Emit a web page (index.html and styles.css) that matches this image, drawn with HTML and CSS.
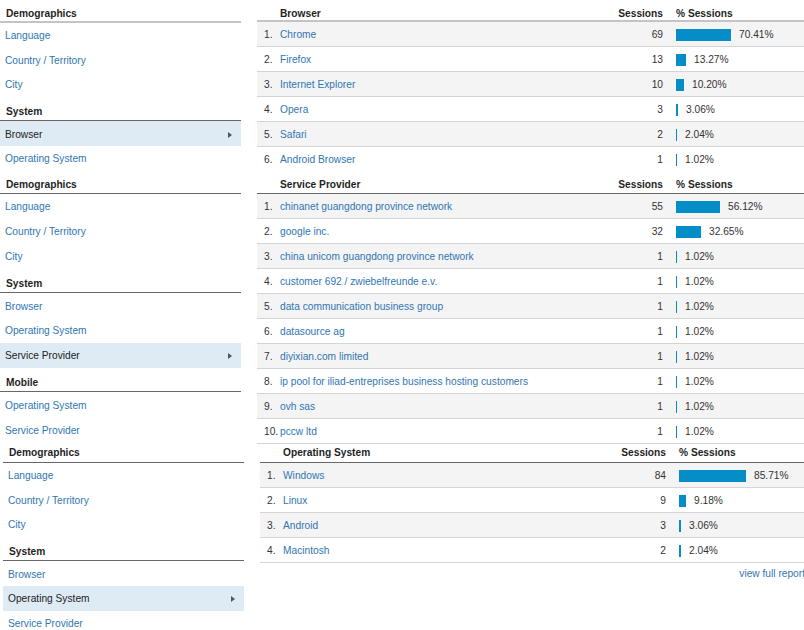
FILE: index.html
```html
<!DOCTYPE html>
<html lang="en">
<head>
<meta charset="utf-8">
<title>Audience reports</title>
<link rel="stylesheet" href="styles.css">
</head>
<body>

<div class="shot shot-1">
  <nav class="nav">
    <div class="nav-head is-first is-soft">Demographics</div>
    <a class="nav-link" href="#">Language</a>
    <a class="nav-link" href="#">Country / Territory</a>
    <a class="nav-link" href="#">City</a>
    <div class="nav-head">System</div>
    <a class="nav-link is-active" href="#">Browser<span class="caret"></span></a>
    <a class="nav-link" href="#">Operating System</a>
  </nav>
  <section class="report">
    <div class="row report-head is-soft">
      <span></span><span>Browser</span><span class="num">Sessions</span><span class="pct">% Sessions</span>
    </div>
    <div class="report-body">
      <div class="row"><span class="rank">1.</span><a class="name" href="#">Chrome</a><span class="num">69</span><span class="pct"><i class="bar" style="width:55px"></i>70.41%</span></div>
      <div class="row"><span class="rank">2.</span><a class="name" href="#">Firefox</a><span class="num">13</span><span class="pct"><i class="bar" style="width:10px"></i>13.27%</span></div>
      <div class="row"><span class="rank">3.</span><a class="name" href="#">Internet Explorer</a><span class="num">10</span><span class="pct"><i class="bar" style="width:8px"></i>10.20%</span></div>
      <div class="row"><span class="rank">4.</span><a class="name" href="#">Opera</a><span class="num">3</span><span class="pct"><i class="bar" style="width:2px"></i>3.06%</span></div>
      <div class="row"><span class="rank">5.</span><a class="name" href="#">Safari</a><span class="num">2</span><span class="pct"><i class="bar" style="width:1px"></i>2.04%</span></div>
      <div class="row"><span class="rank">6.</span><a class="name" href="#">Android Browser</a><span class="num">1</span><span class="pct"><i class="bar" style="width:1px"></i>1.02%</span></div>
    </div>
  </section>
</div>

<div class="shot shot-2">
  <nav class="nav nav-wide">
    <div class="nav-head is-first">Demographics</div>
    <a class="nav-link" href="#">Language</a>
    <a class="nav-link" href="#">Country / Territory</a>
    <a class="nav-link" href="#">City</a>
    <div class="nav-head">System</div>
    <a class="nav-link" href="#">Browser</a>
    <a class="nav-link" href="#">Operating System</a>
    <a class="nav-link is-active" href="#">Service Provider<span class="caret"></span></a>
    <div class="nav-head">Mobile</div>
    <a class="nav-link" href="#">Operating System</a>
    <a class="nav-link" href="#">Service Provider</a>
  </nav>
  <section class="report">
    <div class="row report-head">
      <span></span><span>Service Provider</span><span class="num">Sessions</span><span class="pct">% Sessions</span>
    </div>
    <div class="report-body">
      <div class="row"><span class="rank">1.</span><a class="name" href="#">chinanet guangdong province network</a><span class="num">55</span><span class="pct"><i class="bar" style="width:44px"></i>56.12%</span></div>
      <div class="row"><span class="rank">2.</span><a class="name" href="#">google inc.</a><span class="num">32</span><span class="pct"><i class="bar" style="width:25px"></i>32.65%</span></div>
      <div class="row"><span class="rank">3.</span><a class="name" href="#">china unicom guangdong province network</a><span class="num">1</span><span class="pct"><i class="bar" style="width:1px"></i>1.02%</span></div>
      <div class="row"><span class="rank">4.</span><a class="name" href="#">customer 692 / zwiebelfreunde e.v.</a><span class="num">1</span><span class="pct"><i class="bar" style="width:1px"></i>1.02%</span></div>
      <div class="row"><span class="rank">5.</span><a class="name" href="#">data communication business group</a><span class="num">1</span><span class="pct"><i class="bar" style="width:1px"></i>1.02%</span></div>
      <div class="row"><span class="rank">6.</span><a class="name" href="#">datasource ag</a><span class="num">1</span><span class="pct"><i class="bar" style="width:1px"></i>1.02%</span></div>
      <div class="row"><span class="rank">7.</span><a class="name" href="#">diyixian.com limited</a><span class="num">1</span><span class="pct"><i class="bar" style="width:1px"></i>1.02%</span></div>
      <div class="row"><span class="rank">8.</span><a class="name" href="#">ip pool for iliad-entreprises business hosting customers</a><span class="num">1</span><span class="pct"><i class="bar" style="width:1px"></i>1.02%</span></div>
      <div class="row"><span class="rank">9.</span><a class="name" href="#">ovh sas</a><span class="num">1</span><span class="pct"><i class="bar" style="width:1px"></i>1.02%</span></div>
      <div class="row"><span class="rank">10.</span><a class="name" href="#">pccw ltd</a><span class="num">1</span><span class="pct"><i class="bar" style="width:1px"></i>1.02%</span></div>
    </div>
  </section>
</div>

<div class="shot shot-3">
  <nav class="nav">
    <div class="nav-head is-cropped">Demographics</div>
    <a class="nav-link" href="#">Language</a>
    <a class="nav-link" href="#">Country / Territory</a>
    <a class="nav-link" href="#">City</a>
    <div class="nav-head">System</div>
    <a class="nav-link" href="#">Browser</a>
    <a class="nav-link is-active" href="#">Operating System<span class="caret"></span></a>
    <a class="nav-link" href="#">Service Provider</a>
  </nav>
  <section class="report">
    <div class="row report-head is-cropped">
      <span></span><span>Operating System</span><span class="num">Sessions</span><span class="pct">% Sessions</span>
    </div>
    <div class="report-body">
      <div class="row"><span class="rank">1.</span><a class="name" href="#">Windows</a><span class="num">84</span><span class="pct"><i class="bar" style="width:67px"></i>85.71%</span></div>
      <div class="row"><span class="rank">2.</span><a class="name" href="#">Linux</a><span class="num">9</span><span class="pct"><i class="bar" style="width:7px"></i>9.18%</span></div>
      <div class="row"><span class="rank">3.</span><a class="name" href="#">Android</a><span class="num">3</span><span class="pct"><i class="bar" style="width:2px"></i>3.06%</span></div>
      <div class="row"><span class="rank">4.</span><a class="name" href="#">Macintosh</a><span class="num">2</span><span class="pct"><i class="bar" style="width:2px"></i>2.04%</span></div>
    </div>
    <div class="report-foot"><a href="#">view full report</a></div>
  </section>
</div>

</body>
</html>
```

FILE: styles.css
```css
html, body {
  margin: 0;
  padding: 0;
  overflow: hidden;
  background: #fff;
}

body {
  width: 804px;
  height: 630px;
  font-family: "Liberation Sans", Arial, sans-serif;
  font-size: 10.2px;
  line-height: 12px;
  color: #333;
}

a {
  color: #3076b4;
  text-decoration: none;
}

/* each stacked capture */
.shot {
  display: flex;
  align-items: flex-start;
  overflow: hidden;
}
.shot-1 { height: 171px; }
.shot-2 { height: 273px; }
.shot-3 { margin-left: 3px; height: 190px; }

/* left navigation */
.nav {
  flex: none;
  width: 241px;
}

.nav-head {
  box-sizing: border-box;
  height: 24.6px;
  display: flex;
  align-items: flex-end;
  padding: 0 0 2px 6px;
  border-bottom: 1px solid #676767;
  font-weight: bold;
  color: #1f1f1f;
}
.nav-head.is-first { height: 23px; }
.nav-head.is-cropped { height: 19px; padding-bottom: 3px; }
.nav-head.is-soft {
  border-bottom: 2px solid #c4c4c4;
  padding-bottom: 1px;
}

.nav-link {
  box-sizing: border-box;
  height: 24.6px;
  display: flex;
  align-items: center;
  justify-content: space-between;
  padding: 2px 9px 0 5px;
  color: #3076b4;
}
.nav-wide .nav-head:not(.is-first),
.nav-wide .nav-link {
  height: 24.8px;
}
.nav-link.is-active {
  background: #deebf5;
  color: #222;
}

.caret {
  width: 0;
  height: 0;
  border-left: 4px solid #555;
  border-top: 3px solid transparent;
  border-bottom: 3px solid transparent;
}

/* report table */
.report {
  flex: none;
  width: 548px;
  margin-left: 16px;
}

.row {
  box-sizing: border-box;
  display: grid;
  grid-template-columns: 23px 1fr 70px 142px;
  align-items: center;
  height: 25px;
  padding-top: 2px;
  border-bottom: 1px solid #d5d5d5;
  white-space: nowrap;
}

.report-body .row:nth-child(odd) {
  background: #f4f4f4;
}

.report-head {
  height: 23px;
  align-items: end;
  padding-top: 0;
  padding-bottom: 2px;
  border-bottom: 1px solid #676767;
  font-weight: bold;
  color: #1f1f1f;
}
.report-head.is-soft {
  height: 22px;
  padding-bottom: 0;
  border-bottom: 2px solid #c4c4c4;
}
.report-head.is-cropped { height: 19px; padding-bottom: 3px; }

.rank {
  padding-left: 7px;
  color: #333;
}

.num {
  text-align: right;
}

.pct {
  display: flex;
  align-items: center;
  gap: 8px;
  padding-left: 13px;
}

.bar {
  display: block;
  height: 12px;
  background: #058dc7;
}

.report-foot {
  padding: 5px 3px 0 0;
  text-align: right;
}
```
